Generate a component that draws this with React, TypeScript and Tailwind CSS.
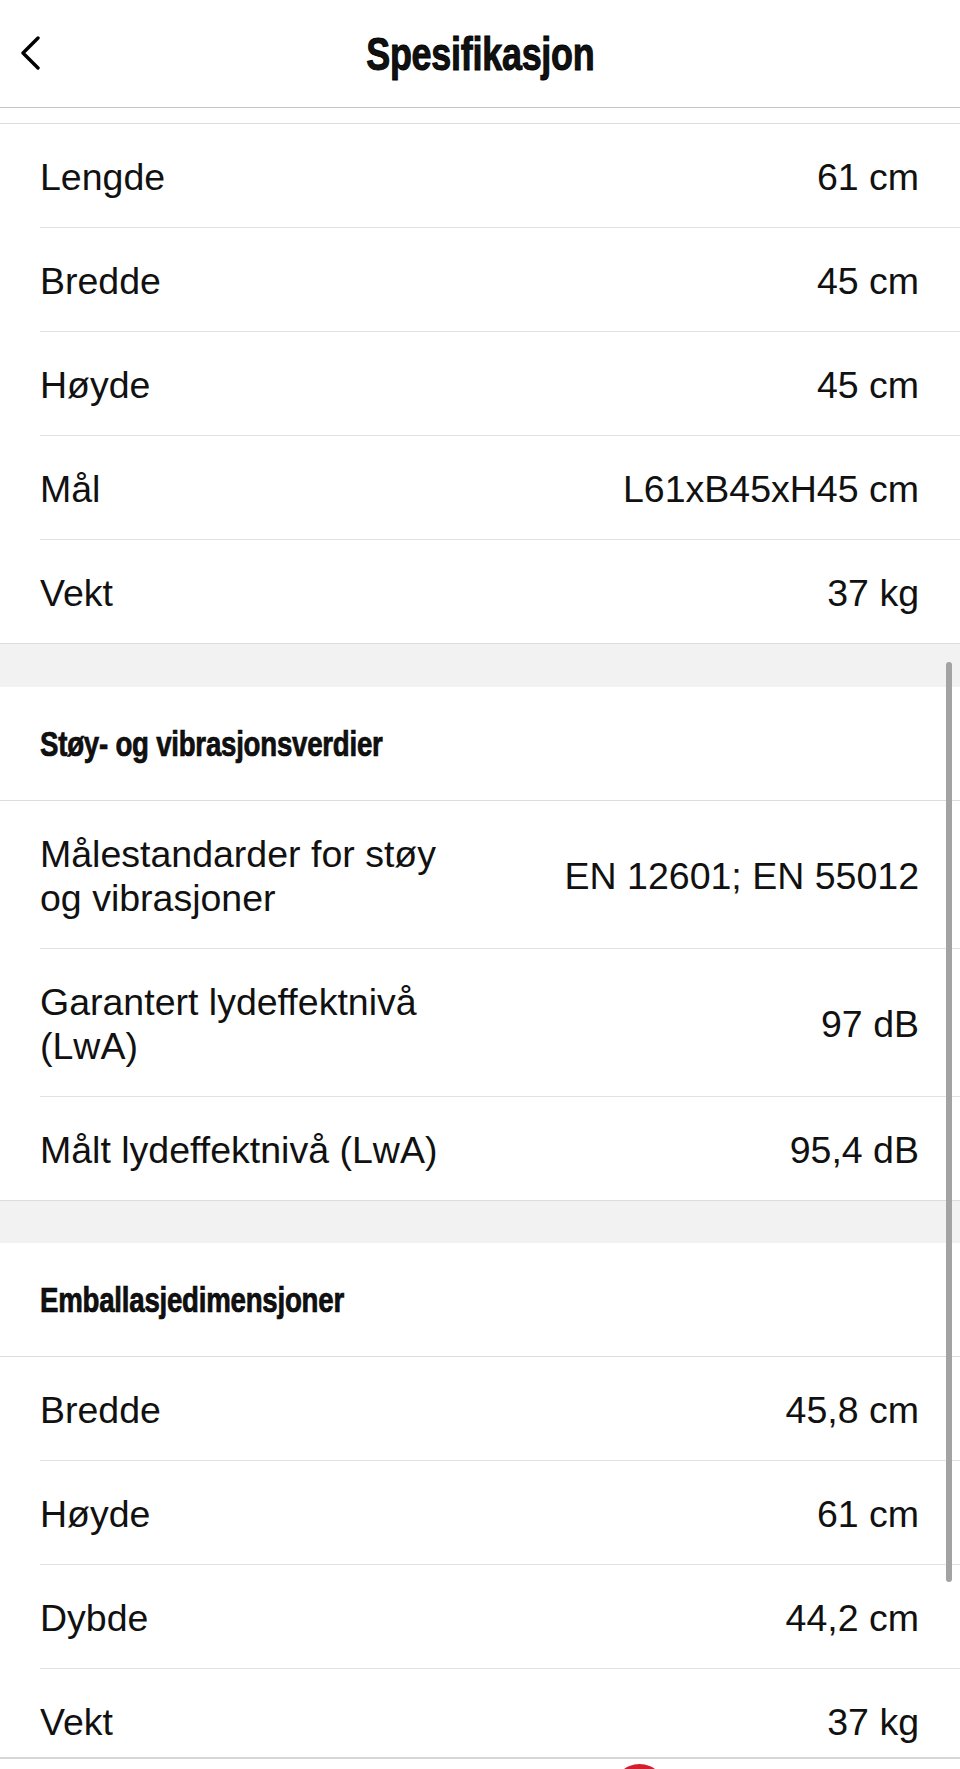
import React from 'react';

type Row = { label: string; value: string };

const dimensions: Row[] = [
  { label: 'Lengde', value: '61 cm' },
  { label: 'Bredde', value: '45 cm' },
  { label: 'Høyde', value: '45 cm' },
  { label: 'Mål', value: 'L61xB45xH45 cm' },
  { label: 'Vekt', value: '37 kg' },
];

const noise: Row[] = [
  { label: 'Målestandarder for støy og vibrasjoner', value: 'EN 12601; EN 55012' },
  { label: 'Garantert lydeffektnivå (LwA)', value: '97 dB' },
  { label: 'Målt lydeffektnivå (LwA)', value: '95,4 dB' },
];

const packaging: Row[] = [
  { label: 'Bredde', value: '45,8 cm' },
  { label: 'Høyde', value: '61 cm' },
  { label: 'Dybde', value: '44,2 cm' },
  { label: 'Vekt', value: '37 kg' },
];

// no condensed face installed, so squeeze Liberation Sans Bold horizontally
const condensed = "font-['Liberation_Sans',Arial,sans-serif] font-bold inline-block";

const SpecRow: React.FC<{ row: Row; last: boolean }> = ({ row, last }) => (
  <div className={last ? 'border-b border-[#dcdcdc]' : 'pl-10'}>
    <div
      className={
        'grid grid-cols-2 items-center pt-[31px] pb-[28px] pr-[41px] ' +
        (last ? 'pl-10' : 'border-b border-[#e2e2e2]')
      }
    >
      <span className="pr-2">{row.label}</span>
      <span className="text-right">{row.value}</span>
    </div>
  </div>
);

const SpecGroup: React.FC<{ title?: string; rows: Row[] }> = ({ title, rows }) => (
  <section className="bg-white">
    {title && (
      <div className="h-[114px] flex items-center pl-10 border-b border-[#dcdcdc]">
        <h2 className={`${condensed} text-[35px] leading-none scale-x-[0.79] origin-left tracking-[-0.3px] [-webkit-text-stroke:0.7px_#000]`}>
          {title}
        </h2>
      </div>
    )}
    {rows.map((r, i) => (
      <SpecRow key={r.label + i} row={r} last={i === rows.length - 1} />
    ))}
  </section>
);

export default function App() {
  return (
    <div className="relative h-[1769px] w-[960px] overflow-hidden bg-white text-[#111] font-['Liberation_Sans',Arial,sans-serif] text-[37.5px] leading-[44px]">
      <header className="relative h-[108px] flex items-center justify-center border-b border-[#c6c6c6]">
        <button className="absolute left-[19px] top-[36px] w-[24px] h-[34px] flex items-center">
          <svg width="22" height="34" viewBox="0 0 22 34" fill="none">
            <path d="M19 2 L4 17 L19 32" stroke="#000" strokeWidth="3.4" strokeLinecap="round" strokeLinejoin="round" />
          </svg>
        </button>
        <h1 className={`${condensed} text-[46px] leading-none scale-x-[0.78] tracking-[-0.3px] [-webkit-text-stroke:1px_#000]`}>
          Spesifikasjon
        </h1>
      </header>

      <div className="h-[15px]" />
      <div className="border-t border-[#dcdcdc]">
        <SpecGroup rows={dimensions} />
      </div>

      <div className="h-[43px] bg-[#f2f2f3]" />
      <SpecGroup title="Støy- og vibrasjonsverdier" rows={noise} />

      <div className="h-[42px] bg-[#f2f2f3]" />
      <SpecGroup title="Emballasjedimensjoner" rows={packaging} />

      {/* scroll indicator */}
      <div className="absolute left-[946px] top-[662px] w-[6px] h-[920px] rounded-full bg-[#a3a3a3]" />

      {/* tab bar peeking at the bottom */}
      <div className="absolute left-0 right-0 bottom-0 h-[12px] bg-white border-t-2 border-[#d6d6d6] overflow-hidden">
        <div className="absolute left-[613px] top-[5px] w-[53px] h-[53px] rounded-full bg-[#d21f2d]" />
      </div>
    </div>
  );
}
